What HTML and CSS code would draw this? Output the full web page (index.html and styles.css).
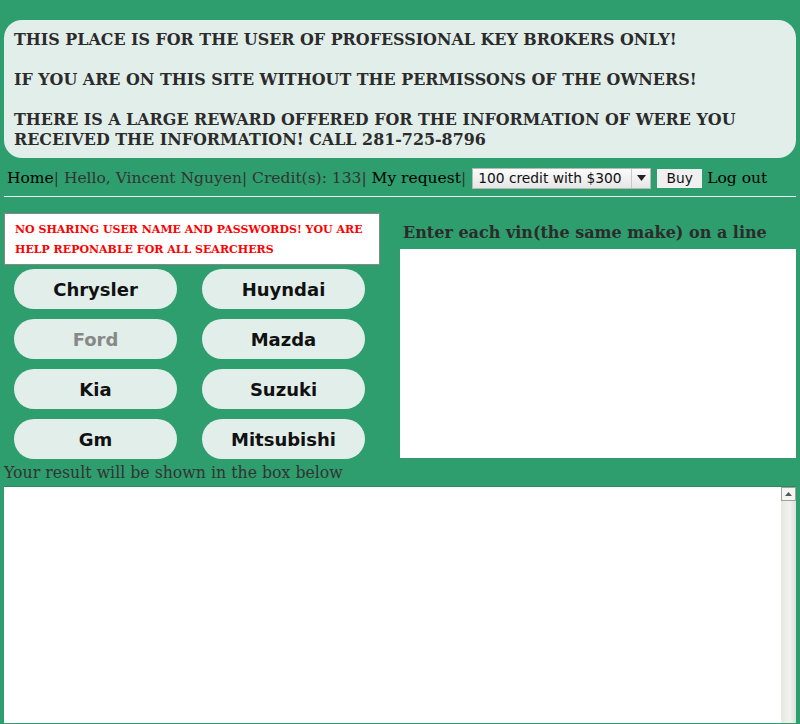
FILE: index.html
```html
<!DOCTYPE html>
<html>
<head>
<meta charset="utf-8">
<link rel="stylesheet" href="styles.css">
</head>
<body>
<div class="notice">
  <p>THIS PLACE IS FOR THE USER OF PROFESSIONAL KEY BROKERS ONLY!</p>
  <p>IF YOU ARE ON THIS SITE WITHOUT THE PERMISSONS OF THE OWNERS!</p>
  <p>THERE IS A LARGE REWARD OFFERED FOR THE INFORMATION OF WERE YOU RECEIVED THE INFORMATION! CALL 281-725-8796</p>
</div>
<div class="nav">
  <a class="link">Home</a><span class="muted">| Hello, Vincent Nguyen| Credit(s): 133| </span><a class="link">My request</a><span class="muted">|</span>
  <span class="select"><span class="select-text">100 credit with $300</span><span class="select-arrow"><svg width="9" height="6" viewBox="0 0 9 6"><path d="M0 0H9L4.5 6Z" fill="#222"/></svg></span></span>
  <span class="buy">Buy</span>
  <a class="link">Log out</a>
</div>
<hr class="rule">
<div class="main">
  <div class="left">
    <div class="warn">NO SHARING USER NAME AND PASSWORDS! YOU ARE HELP REPONABLE FOR ALL SEARCHERS</div>
    <div class="makes">
      <span class="make">Chrysler</span>
      <span class="make">Huyndai</span>
      <span class="make disabled">Ford</span>
      <span class="make">Mazda</span>
      <span class="make">Kia</span>
      <span class="make">Suzuki</span>
      <span class="make">Gm</span>
      <span class="make">Mitsubishi</span>
    </div>
  </div>
  <div class="right">
    <div class="vin-label">Enter each vin(the same make) on a line</div>
    <div class="vin-box"></div>
  </div>
</div>
<div class="result-label">Your result will be shown in the box below</div>
<div class="result-box">
  <div class="scrollbar"><div class="scroll-up"><svg width="7" height="4" viewBox="0 0 7 4"><path d="M0 4H7L3.5 0Z" fill="#555"/></svg></div></div>
</div>
</body>
</html>
```
FILE: styles.css
```css
html, body {
  margin: 0;
  padding: 0;
}
body {
  background: #2e9e6e;
  padding: 20px 4px 0 4px;
  font-family: "DejaVu Serif", serif;
  color: #333;
}
.notice {
  background: #e2eeea;
  border-radius: 18px;
  padding: 10px 10px 8px 10px;
  font-weight: bold;
  font-size: 15.9px;
  line-height: 20px;
  color: #2b2b2b;
}
.notice p {
  margin: 0 0 20px 0;
}
.notice p:last-child {
  margin-bottom: 0;
}
.nav {
  display: flex;
  align-items: center;
  margin-top: 9px;
  padding-left: 3px;
  font-size: 15.5px;
  height: 22px;
  white-space: pre;
}
.link {
  color: #000;
}
.muted {
  color: #333;
}
.select {
  display: inline-flex;
  align-items: stretch;
  margin-left: 6px;
  width: 179px;
  height: 21px;
  box-sizing: border-box;
  border: 1px solid #b8b8b8;
  background: linear-gradient(#fbfbfb, #e6e6e6);
  font-family: "DejaVu Sans", sans-serif;
  font-size: 13.8px;
  color: #111;
}
.select-text {
  flex: 1;
  padding-left: 5px;
  line-height: 19px;
}
.select-arrow {
  width: 18px;
  border-left: 1px solid #c8c8c8;
  display: flex;
  align-items: center;
  justify-content: center;
}
.buy {
  margin-left: 6px;
  width: 45px;
  height: 19px;
  background: #f0f0f0;
  font-family: "DejaVu Sans", sans-serif;
  font-size: 13.8px;
  color: #111;
  text-align: center;
  line-height: 19px;
}
.nav .buy + .link {
  margin-left: 5px;
}
.rule {
  margin: 7px 0 0 0;
  border: 0;
  border-top: 1px solid #e8f4ee;
  height: 0;
}
.main {
  display: flex;
  margin-top: 16px;
}
.left {
  width: 376px;
}
.warn {
  background: #fff;
  border: 1px solid #888;
  padding: 6px 10px 4px 10px;
  color: #f00;
  font-weight: bold;
  font-size: 11px;
  line-height: 20px;
  height: 40px;
}
.makes {
  display: grid;
  grid-template-columns: 163px 163px;
  column-gap: 25px;
  row-gap: 10px;
  padding: 4px 0 0 10px;
}
.make {
  height: 40px;
  border-radius: 20px;
  background: #e2eeea;
  font-family: "DejaVu Sans", sans-serif;
  font-weight: bold;
  font-size: 18px;
  color: #111;
  display: flex;
  align-items: center;
  justify-content: center;
}
.make.disabled {
  color: #888;
}
.right {
  margin-left: 20px;
  flex: 1;
}
.vin-label {
  font-weight: bold;
  font-size: 16px;
  padding: 10px 0 0 3px;
  height: 26px;
  color: #2b2b2b;
}
.vin-box {
  background: #fff;
  height: 209px;
}
.result-label {
  margin-top: 3px;
  font-size: 15.75px;
  height: 24px;
  line-height: 22px;
}
.result-box {
  background: #fff;
  height: 236px;
  position: relative;
  border-top: 1px solid #2a8a5f;
}
.scrollbar {
  position: absolute;
  right: 0;
  top: 0;
  bottom: 0;
  width: 15px;
  background: linear-gradient(90deg, #e6e6e2, #f2f2ef 60%, #dededa);
}
.scroll-up {
  height: 14px;
  border: 1px solid #a0a0a0;
  background: #f4f4f2;
  display: flex;
  align-items: center;
  justify-content: center;
  box-sizing: border-box;
}
```
